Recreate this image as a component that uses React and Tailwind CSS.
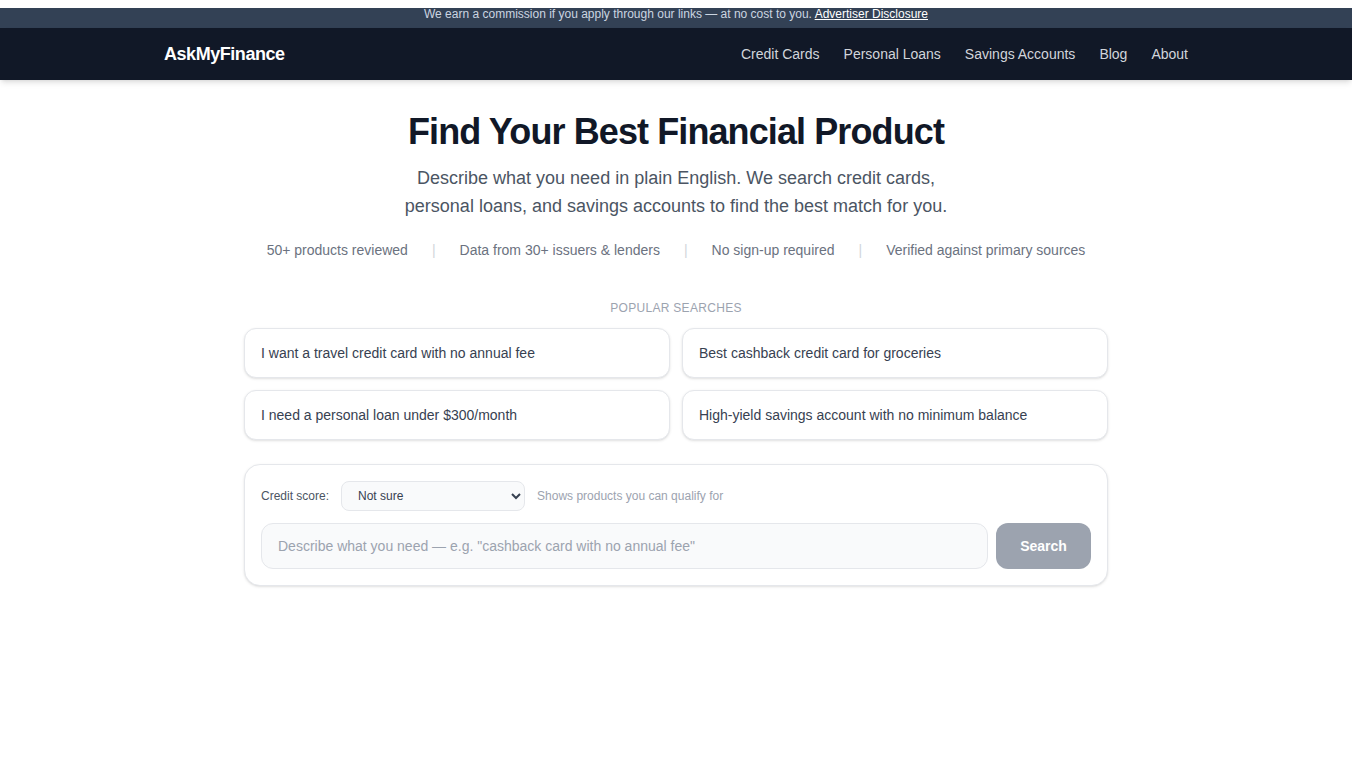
import React from 'react'

const navLinks = ['Credit Cards', 'Personal Loans', 'Savings Accounts', 'Blog', 'About']

const stats = [
  '50+ products reviewed',
  'Data from 30+ issuers & lenders',
  'No sign-up required',
  'Verified against primary sources',
]

const popular = [
  'I want a travel credit card with no annual fee',
  'Best cashback credit card for groceries',
  'I need a personal loan under $300/month',
  'High-yield savings account with no minimum balance',
]

export default function App(){
  const [query, setQuery] = React.useState('')
  const [score, setScore] = React.useState('unknown')

  return <div className="min-h-screen bg-white font-['Liberation_Sans',Arial,sans-serif]">
    <div className="pt-2 bg-white">
      <div className="h-5 bg-[#334155] text-center text-xs leading-3 text-[#cbd5e1]">
        We earn a commission if you apply through our links — at no cost to you.{' '}
        <a href="#" className="text-white underline">Advertiser Disclosure</a>
      </div>
    </div>

    <header className="bg-[#111827] shadow-md">
      <div className="max-w-5xl mx-auto h-[52px] flex items-center justify-between">
        <a href="#" className="text-lg font-bold text-white tracking-tight">AskMyFinance</a>
        <nav className="flex items-center gap-6 text-sm text-[#d1d5db]">
          {navLinks.map(l => <a key={l} href="#">{l}</a>)}
        </nav>
      </div>
    </header>

    <main className="max-w-4xl mx-auto px-4 pt-8 pb-16">
      <h1 className="text-4xl font-bold text-[#111827] text-center tracking-tight">Find Your Best Financial Product</h1>
      <p className="mt-3 max-w-xl mx-auto text-center text-lg leading-7 text-[#4b5563]">
        Describe what you need in plain English. We search credit cards, personal loans, and savings accounts to find the best match for you.
      </p>

      <div className="mt-5 flex items-center justify-center gap-6 text-sm leading-5 text-[#6b7280]">
        {stats.map((s, i) => <React.Fragment key={s}>
          {i > 0 && <span className="text-[#d1d5db]">|</span>}
          <span>{s}</span>
        </React.Fragment>)}
      </div>

      <p className="mt-10 mb-3 text-center text-xs leading-4 uppercase tracking-wide text-[#9ca3af]">Popular searches</p>
      <div className="grid grid-cols-2 gap-3">
        {popular.map(p => <button key={p} onClick={() => setQuery(p)}
          className="text-left bg-white border border-[#e5e7eb] rounded-xl shadow-sm px-4 py-[14px] text-sm leading-5 text-[#374151]">
          {p}
        </button>)}
      </div>

      <div className="mt-6 bg-white border border-[#e5e7eb] rounded-2xl shadow-sm p-4">
        <div className="flex items-center gap-3 text-xs">
          <label className="text-[#4b5563]">Credit score:</label>
          <select value={score} onChange={e => setScore(e.target.value)}
            className="w-[184px] h-[30px] px-3 rounded-lg border border-[#e5e7eb] bg-[#f9fafb] text-xs text-[#374151]">
            <option value="unknown">Not sure</option>
            <option value="excellent">Excellent (740+)</option>
            <option value="good">Good (670-739)</option>
            <option value="fair">Fair (580-669)</option>
            <option value="poor">Poor (below 580)</option>
          </select>
          <span className="text-[#9ca3af]">Shows products you can qualify for</span>
        </div>
        <div className="mt-3 flex gap-2">
          <input value={query} onChange={e => setQuery(e.target.value)}
            placeholder={'Describe what you need — e.g. "cashback card with no annual fee"'}
            className="flex-1 h-[46px] px-4 rounded-xl border border-[#e5e7eb] bg-[#f9fafb] text-sm text-[#111827] placeholder:text-[#9ca3af] outline-none" />
          <button disabled={!query} className="w-[95px] h-[46px] rounded-xl bg-[#9ca3af] text-white text-sm font-bold">Search</button>
        </div>
      </div>
    </main>
  </div>
}
